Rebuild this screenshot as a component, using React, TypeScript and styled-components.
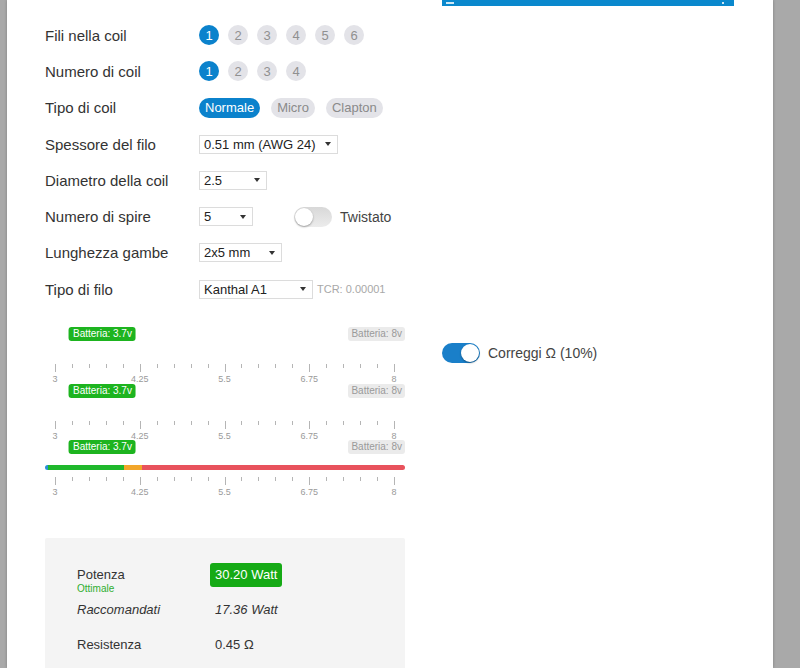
import styled, { createGlobalStyle } from "styled-components"

const GlobalStyle = createGlobalStyle`
    html, body {
        margin: 0;
        padding: 0;
        background: #a9a9a9;
        font-family: "Liberation Sans", Arial, sans-serif;
        color: #333;
    }
`

const MIN = 3
const MAX = 8
const pct = (v: number) => ((v - MIN) / (MAX - MIN)) * 100

type SelectProps = { value: string; width: number }

function Select({ value, width }: SelectProps) {
    return (
        <SelectBox $width={width}>
            <span>{value}</span>
            <Caret />
        </SelectBox>
    )
}

function Slider({ withTrack }: { withTrack?: boolean }) {
    const ticks = Array.from({ length: 21 }, (_, i) => i)
    const labels = ["3", "4.25", "5.5", "6.75", "8"]
    return (
        <SliderBox>
            <Range>
                <Tag $on style={{ left: `${pct(3.7)}%` }}>Batteria: 3.7v</Tag>
            </Range>
            <MaxTag>Batteria: 8v</MaxTag>
            {withTrack && (
                <Track>
                    <Segment $grow={3} $color="#2a8fd6" />
                    <Segment $grow={76} $color="#1fb82c" />
                    <Segment $grow={18} $color="#f2a62a" />
                    <Segment $grow={263} $color="#e8525c" />
                </Track>
            )}
            <Range>
                {ticks.map(i => (
                    <Tick key={i} $major={i % 5 === 0} style={{ left: `${i * 5}%` }} />
                ))}
                {labels.map((l, i) => (
                    <TickLabel key={l} style={{ left: `${i * 25}%` }}>{l}</TickLabel>
                ))}
            </Range>
        </SliderBox>
    )
}

export default function App() {
    return (
        <>
            <GlobalStyle />
            <Page>
                <LeftCol>
                    <Row>
                        <Label>Fili nella coil</Label>
                        <Group>
                            {[1, 2, 3, 4, 5, 6].map(n => (
                                <Circle key={n} $active={n === 1}>{n}</Circle>
                            ))}
                        </Group>
                    </Row>
                    <Row>
                        <Label>Numero di coil</Label>
                        <Group>
                            {[1, 2, 3, 4].map(n => (
                                <Circle key={n} $active={n === 1}>{n}</Circle>
                            ))}
                        </Group>
                    </Row>
                    <Row>
                        <Label>Tipo di coil</Label>
                        <Group $gap={11}>
                            <Pill $active>Normale</Pill>
                            <Pill>Micro</Pill>
                            <Pill>Clapton</Pill>
                        </Group>
                    </Row>
                    <Row>
                        <Label>Spessore del filo</Label>
                        <Select value="0.51 mm (AWG 24)" width={139} />
                    </Row>
                    <Row>
                        <Label>Diametro della coil</Label>
                        <Select value="2.5" width={68} />
                    </Row>
                    <Row>
                        <Label>Numero di spire</Label>
                        <Select value="5" width={54} />
                        <SwitchWrap $left={41}>
                            <Switch />
                            <SwitchText>Twistato</SwitchText>
                        </SwitchWrap>
                    </Row>
                    <Row>
                        <Label>Lunghezza gambe</Label>
                        <Select value="2x5 mm" width={83} />
                    </Row>
                    <Row>
                        <Label>Tipo di filo</Label>
                        <Select value="Kanthal A1" width={114} />
                        <Hint>TCR: 0.00001</Hint>
                    </Row>

                    <Sliders>
                        <Slider />
                        <Slider />
                        <Slider withTrack />
                    </Sliders>

                    <Results>
                        <ResultRow>
                            <ResultLabel>
                                <span>Potenza</span>
                                <Sub>Ottimale</Sub>
                            </ResultLabel>
                            <Badge>30.20 Watt</Badge>
                        </ResultRow>
                        <ResultRow $italic>
                            <ResultLabel $flat>Raccomandati</ResultLabel>
                            <Value>17.36 Watt</Value>
                        </ResultRow>
                        <ResultRow>
                            <ResultLabel $flat>Resistenza</ResultLabel>
                            <Value>0.45 Ω</Value>
                        </ResultRow>
                    </Results>
                </LeftCol>

                <RightCol>
                    <TopBar>
                        <BarMark $w={8} />
                        <BarMark $w={2} />
                    </TopBar>
                    <SwitchWrap $top={337}>
                        <Switch $on />
                        <SwitchText>Correggi Ω (10%)</SwitchText>
                    </SwitchWrap>
                </RightCol>
            </Page>
        </>
    )
}

const Page = styled.div`
    margin-left: 7px;
    width: 766px;
    min-height: 668px;
    box-sizing: border-box;
    padding-left: 38px;
    background: #fff;
    display: flex;
    gap: 37px;
    box-shadow: 0 0 3px rgba(0, 0, 0, 0.25);
`
const LeftCol = styled.div`
    width: 360px;
    padding-top: 17px;
`
const RightCol = styled.div`
    width: 292px;
`
const Row = styled.div`
    display: flex;
    align-items: center;
    height: 36.3px;
`
const Label = styled.div`
    width: 154px;
    font-size: 15px;
    color: #333;
`
const Group = styled.div<{ $gap?: number }>`
    display: flex;
    gap: ${p => p.$gap ?? 9}px;
`
const Circle = styled.div<{ $active?: boolean }>`
    width: 20px;
    height: 20px;
    border-radius: 50%;
    display: flex;
    align-items: center;
    justify-content: center;
    font-size: 13px;
    background: ${p => (p.$active ? "#0b82cc" : "#e3e3e8")};
    color: ${p => (p.$active ? "#fff" : "#909090")};
`
const Pill = styled.div<{ $active?: boolean }>`
    height: 20px;
    line-height: 20px;
    padding: 0 6px;
    border-radius: 10px;
    font-size: 13px;
    background: ${p => (p.$active ? "#0b82cc" : "#e3e3e8")};
    color: ${p => (p.$active ? "#fff" : "#8a8a8a")};
`
const SelectBox = styled.div<{ $width: number }>`
    width: ${p => p.$width}px;
    height: 19px;
    box-sizing: border-box;
    border: 1px solid #dcdcdc;
    background: #fff;
    display: flex;
    align-items: center;
    justify-content: space-between;
    padding: 0 6px 0 4px;
    font-size: 13px;
    color: #222;
`
const Caret = styled.span`
    width: 0;
    height: 0;
    border-left: 3px solid transparent;
    border-right: 3px solid transparent;
    border-top: 4px solid #333;
`
const Hint = styled.span`
    margin-left: 4px;
    font-size: 11px;
    color: #a8a8a8;
`
const SwitchWrap = styled.div<{ $left?: number; $top?: number }>`
    display: flex;
    align-items: center;
    gap: 8px;
    margin-left: ${p => p.$left ?? 0}px;
    margin-top: ${p => p.$top ?? 0}px;
`
const Switch = styled.div<{ $on?: boolean }>`
    width: 38px;
    height: 20px;
    border-radius: 10px;
    box-sizing: border-box;
    background: ${p => (p.$on ? "#1a7fc9" : "linear-gradient(#d8d8d8, #ececec)")};
    display: flex;
    justify-content: ${p => (p.$on ? "flex-end" : "flex-start")};
    align-items: center;
    padding: 1px;
    &::after {
        content: "";
        width: 18px;
        height: 18px;
        border-radius: 50%;
        background: #fff;
        box-shadow: 0 1px 2px rgba(0, 0, 0, 0.35);
    }
`
const SwitchText = styled.span`
    font-size: 14px;
    color: #444;
`
const Sliders = styled.div`
    margin-top: 20px;
`
const SliderBox = styled.div`
    position: relative;
    height: 56.5px;
`
const Range = styled.div`
    position: absolute;
    top: 0;
    bottom: 0;
    left: 10px;
    right: 11px;
`
const Tag = styled.div<{ $on?: boolean }>`
    position: absolute;
    top: 0;
    transform: translateX(-50%);
    white-space: nowrap;
    font-size: 10px;
    line-height: 14px;
    padding: 0 4px;
    border-radius: 3px;
    background: #1db41f;
    color: #fff;
`
const MaxTag = styled.div`
    position: absolute;
    top: 0;
    right: 0;
    font-size: 10px;
    line-height: 14px;
    padding: 0 3px;
    border-radius: 3px;
    background: #ebebeb;
    color: #9a9a9a;
`
const Track = styled.div`
    position: absolute;
    top: 25px;
    left: 0;
    right: 0;
    height: 5px;
    display: flex;
    border-radius: 3px;
    overflow: hidden;
`
const Segment = styled.div<{ $grow: number; $color: string }>`
    flex: ${p => p.$grow} 0 0;
    background: ${p => p.$color};
`
const Tick = styled.div<{ $major?: boolean }>`
    position: absolute;
    top: 37px;
    width: 1px;
    height: ${p => (p.$major ? 8 : 4)}px;
    background: #b5b5b5;
`
const TickLabel = styled.div`
    position: absolute;
    top: 47px;
    transform: translateX(-50%);
    font-size: 9px;
    line-height: 11px;
    color: #9a9a9a;
`
const Results = styled.div`
    margin-top: 41px;
    background: #f4f4f4;
    padding: 25px 0 0 32px;
    min-height: 105px;
    border-radius: 2px 2px 0 0;
`
const ResultRow = styled.div<{ $italic?: boolean }>`
    display: flex;
    align-items: flex-start;
    height: 35px;
    font-size: 13px;
    font-style: ${p => (p.$italic ? "italic" : "normal")};
    color: #333;
`
const ResultLabel = styled.div<{ $flat?: boolean }>`
    width: 133px;
    display: flex;
    flex-direction: column;
    padding-top: ${p => (p.$flat ? 0 : 4)}px;
    line-height: ${p => (p.$flat ? 24 : 16)}px;
`
const Sub = styled.span`
    font-size: 10px;
    line-height: 11px;
    color: #2fae2f;
`
const Badge = styled.div`
    height: 24px;
    line-height: 24px;
    padding: 0 5px;
    border-radius: 3px;
    background: #15aa15;
    color: #fff;
    font-size: 13px;
`
const Value = styled.div`
    line-height: 24px;
    padding-left: 5px;
`
const TopBar = styled.div`
    height: 6px;
    background: #0a88cd;
    display: flex;
    justify-content: space-between;
    align-items: flex-start;
    padding: 0 10px 0 4px;
`
const BarMark = styled.span<{ $w: number }>`
    width: ${p => p.$w}px;
    height: 2px;
    margin-top: 2px;
    background: rgba(255, 255, 255, 0.8);
`
